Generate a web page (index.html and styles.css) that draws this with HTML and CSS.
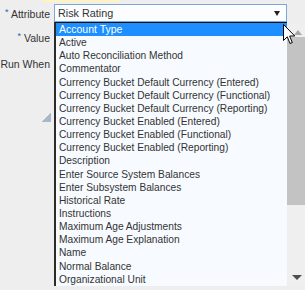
FILE: index.html
```html
<!DOCTYPE html>
<html lang="en">
<head>
    <meta charset="UTF-8">
    <title>Rule Condition</title>
    <link rel="stylesheet" href="styles.css">
</head>
<body>
    <div class="notice"></div>
    <div class="form">
        <div class="row row-attr">
            <label class="label"><span class="req">*</span> Attribute</label>
            <div class="select">
                <span>Risk Rating</span>
                <span class="caret"></span>
            </div>
        </div>
        <div class="row row-value">
            <label class="label"><span class="req">*</span> Value</label>
        </div>
        <div class="row row-when">
            <div class="label label-when">
                <span>Run When</span>
                <span class="grip"></span>
            </div>
        </div>
    </div>

    <!-- open dropdown list -->
    <div class="listbox">
        <ul class="options">
            <li class="selected">Account Type</li>
            <li>Active</li>
            <li>Auto Reconciliation Method</li>
            <li>Commentator</li>
            <li>Currency Bucket Default Currency (Entered)</li>
            <li>Currency Bucket Default Currency (Functional)</li>
            <li>Currency Bucket Default Currency (Reporting)</li>
            <li>Currency Bucket Enabled (Entered)</li>
            <li>Currency Bucket Enabled (Functional)</li>
            <li>Currency Bucket Enabled (Reporting)</li>
            <li>Description</li>
            <li>Enter Source System Balances</li>
            <li>Enter Subsystem Balances</li>
            <li>Historical Rate</li>
            <li>Instructions</li>
            <li>Maximum Age Adjustments</li>
            <li>Maximum Age Explanation</li>
            <li>Name</li>
            <li>Normal Balance</li>
            <li>Organizational Unit</li>
        </ul>
        <div class="scrollbar">
            <span class="arrow-up"></span>
            <span class="thumb"></span>
            <span class="arrow-down"></span>
        </div>
    </div>

    <svg class="cursor" width="14" height="22" viewBox="0 0 14 22">
        <path d="M0.5 0.5 L0.5 16.5 L4.3 12.8 L7 19.5 L9.3 18.6 L6.6 12 L11.8 12 Z" fill="#fff" stroke="#000" stroke-width="1"/>
    </svg>
</body>
</html>
```

FILE: styles.css
```css
/* base */
* {
    margin: 0;
    padding: 0;
    box-sizing: border-box;
}
body {
    background: #eeeeee;
    font-family: 'Liberation Sans', Arial, sans-serif;
    font-size: 10.5px;
    color: #333;
    width: 305px;
    height: 290px;
    overflow: hidden;
    position: relative;
}

/* bottom edge of a message box above */
.notice {
    margin-left: 42px;
    width: 78px;
    height: 2px;
    background: #fff3c2;
}

/* form rows */
.form {
    padding-top: 2px;
}
.row {
    display: flex;
    gap: 4px;
}
.label {
    width: 50px;
    text-align: right;
    white-space: nowrap;
    line-height: 16px;
}
.req {
    color: #2d63b8;
    font-size: 9px;
    vertical-align: top;
    line-height: 12px;
}
.row-attr {
    height: 18px;
    align-items: center;
}
.row-attr .label {
    margin-top: 2px;
}
.row-value {
    margin-top: 8px;
    height: 16px;
}
.row-when {
    margin-top: 10px;
}
.label-when {
    height: 66px;
    display: flex;
    flex-direction: column;
    justify-content: space-between;
    align-items: flex-end;
}
.grip {
    width: 9px;
    height: 10px;
    margin-right: -1px;
    background: linear-gradient(to bottom right, transparent 50%, #a9b8c8 50%);
}

/* closed select */
.select {
    width: 233px;
    height: 18px;
    border: 1px solid #7fa6dc;
    background: #fbfdff;
    display: flex;
    align-items: center;
    justify-content: space-between;
    padding: 0 6px 0 3px;
    font-size: 10.8px;
}
.caret {
    width: 0;
    height: 0;
    border-left: 3.5px solid transparent;
    border-right: 3.5px solid transparent;
    border-top: 5px solid #222;
    margin-top: 1px;
}

/* opened list */
.listbox {
    position: absolute;
    left: 54px;
    top: 22px;
    width: 251px;
    height: 264px;
    display: flex;
}
.options {
    flex: 1;
    list-style: none;
    background: #f7fbff;
    border-left: 2px solid #2b2b2b;
    border-top: 1px solid #111;
    overflow: hidden;
    font-size: 10.2px;
}
.options li {
    height: 13.15px;
    line-height: 13.15px;
    padding-left: 3px;
    white-space: nowrap;
}
.options li.selected {
    background: #1e8fff;
    color: #fff;
    font-size: 10.5px;
}

/* scrollbar */
.scrollbar {
    width: 18px;
    margin-top: 1px;
    background: #f0efef;
    display: flex;
    flex-direction: column;
    align-items: center;
}
.arrow-up {
    margin-top: 7px;
    width: 0;
    height: 0;
    border-left: 4.5px solid transparent;
    border-right: 4.5px solid transparent;
    border-bottom: 5px solid #a6a6a6;
    margin-left: 4px;
}
.thumb {
    margin-top: 2px;
    width: 100%;
    height: 168px;
    background: #c3c3c3;
}
.arrow-down {
    margin-top: auto;
    margin-bottom: 6px;
    width: 0;
    height: 0;
    border-left: 5px solid transparent;
    border-right: 5px solid transparent;
    border-top: 5px solid #4e4e4e;
    margin-left: 2px;
}

/* mouse pointer over the list */
.cursor {
    position: absolute;
    left: 283px;
    top: 24px;
}
```
